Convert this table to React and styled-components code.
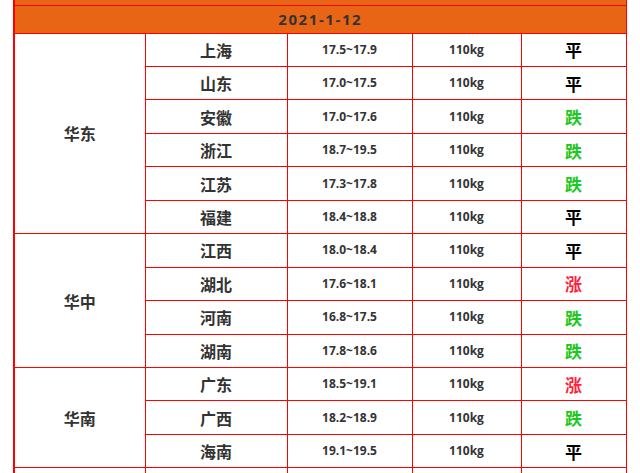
import React from "react";
import styled, { createGlobalStyle } from "styled-components";

const Global = createGlobalStyle`
  html, body { margin: 0; padding: 0; background: #fff; }
  body { font-family: "Open Sans", "Noto Sans CJK SC", sans-serif; }
`;

const Page = styled.div`
  width: 640px;
  height: 473px;
  overflow: hidden;
  padding: 0 14px 0 13px;
  box-sizing: border-box;
`;

const Table = styled.table`
  width: 100%;
  border-collapse: collapse;
  table-layout: fixed;
  border-left: 2px solid #ff0000;
  border-right: 1px solid #ff0000;
`;

const Cell = styled.td`
  border: 1px solid #ff0000;
  padding: 0;
  text-align: center;
  vertical-align: middle;
  color: #333;
  font-weight: 700;
  font-family: "Open Sans", "Noto Sans CJK SC", sans-serif;
  font-size: ${(p) => p.$size || 12}px;
  line-height: 1;
`;

const TopRow = styled.tr`
  height: 5px;
  background: #e96516;
  td { border-top: none; }
`;

const DateRow = styled.tr`
  height: 28px;
  background: #e96516;
`;

const DateCell = styled(Cell)`
  font-size: 15px;
  letter-spacing: 1.6px;
  color: #333;
`;

const DataRow = styled.tr`
  height: 33.46px;
`;

const NameCell = styled(Cell)`
  font-family: "Noto Sans CJK SC", sans-serif;
  font-size: 16px;
`;

const TREND_COLORS = { 平: "#000", 涨: "#ff1f3d", 跌: "#1ec81e" };

const TrendCell = styled(Cell)`
  font-family: "Noto Sans CJK SC", sans-serif;
  font-size: 17px;
  color: ${(p) => TREND_COLORS[p.$trend]};
`;

const regions = [
  {
    name: "华东",
    rows: [
      ["上海", "17.5~17.9", "平"],
      ["山东", "17.0~17.5", "平"],
      ["安徽", "17.0~17.6", "跌"],
      ["浙江", "18.7~19.5", "跌"],
      ["江苏", "17.3~17.8", "跌"],
      ["福建", "18.4~18.8", "平"],
    ],
  },
  {
    name: "华中",
    rows: [
      ["江西", "18.0~18.4", "平"],
      ["湖北", "17.6~18.1", "涨"],
      ["河南", "16.8~17.5", "跌"],
      ["湖南", "17.8~18.6", "跌"],
    ],
  },
  {
    name: "华南",
    rows: [
      ["广东", "18.5~19.1", "涨"],
      ["广西", "18.2~18.9", "跌"],
      ["海南", "19.1~19.5", "平"],
    ],
  },
];

export default function App() {
  return (
    <Page>
      <Global />
      <Table>
        <colgroup>
          <col style={{ width: 131 }} />
          <col style={{ width: 142 }} />
          <col style={{ width: 125 }} />
          <col style={{ width: 109 }} />
          <col style={{ width: 105 }} />
        </colgroup>
        <tbody>
          <TopRow>
            <Cell colSpan={5} />
          </TopRow>
          <DateRow>
            <DateCell colSpan={5}>2021-1-12</DateCell>
          </DateRow>
          {regions.map((region) =>
            region.rows.map(([prov, price, trend], i) => (
              <DataRow key={prov}>
                {i === 0 && (
                  <NameCell rowSpan={region.rows.length}>{region.name}</NameCell>
                )}
                <NameCell>{prov}</NameCell>
                <Cell>{price}</Cell>
                <Cell>110kg</Cell>
                <TrendCell $trend={trend}>{trend}</TrendCell>
              </DataRow>
            ))
          )}
          <DataRow>
            <Cell />
            <Cell />
            <Cell />
            <Cell />
            <Cell />
          </DataRow>
        </tbody>
      </Table>
    </Page>
  );
}
